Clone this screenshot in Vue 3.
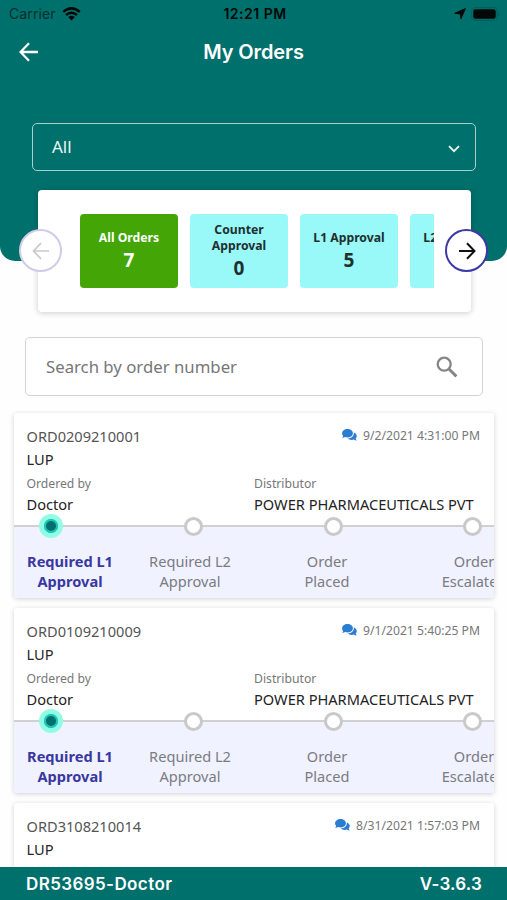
<script setup>
const tiles = [
  { label: 'All Orders', count: 7, active: true },
  { label: 'Counter Approval', count: 0 },
  { label: 'L1 Approval', count: 5 },
  { label: 'L2 Approval', count: 2 },
]
const orders = [
  { id: 'ORD0209210001', date: '9/2/2021 4:31:00 PM' },
  { id: 'ORD0109210009', date: '9/1/2021 5:40:25 PM' },
  { id: 'ORD3108210014', date: '8/31/2021 1:57:03 PM' },
]
const steps = [
  ['Required L1', 'Approval'],
  ['Required L2', 'Approval'],
  ['Order', 'Placed'],
  ['Order', 'Escalated'],
]
</script>

<template>
  <div class="screen">
    <header class="hero">
      <div class="status">
        <div class="carrier">
          <span class="carrier-name">Carrier</span>
          <svg width="19" height="14" viewBox="0 0 19 14">
            <path d="M1.2 4.9Q9.5-2.2 17.8 4.9M4 8Q9.5 3.4 15 8" fill="none" stroke="#020807" stroke-width="2.5" />
            <path d="M6.2 10.1Q9.5 7.6 12.8 10.1L9.5 13.5Z" fill="#020807" />
          </svg>
        </div>
        <span class="time">12:21 PM</span>
        <div class="indicators">
          <svg width="12" height="12" viewBox="0 0 12 12"><path d="M11.4.6 6.9 10.9 6.2 5.9.8 5.3Z" fill="#020807" stroke="#020807" stroke-width="1" stroke-linejoin="round" /></svg>
          <svg width="30" height="14" viewBox="0 0 30 14">
            <rect x=".7" y=".7" width="25.6" height="12.6" rx="3.8" fill="none" stroke="#035f5c" stroke-width="1.2" />
            <rect x="2.3" y="2.3" width="22.4" height="9.4" rx="2.3" fill="#020807" />
            <path d="M27.7 4.8Q29.4 7 27.7 9.2Z" fill="#035350" />
          </svg>
        </div>
      </div>
      <div class="titlebar">
        <svg class="back" width="20" height="20" viewBox="0 0 20 20"><path d="M10 1.3 1.5 10 10 18.7M1.7 10H19" fill="none" stroke="#fff" stroke-width="2.3" /></svg>
        <h1>My Orders</h1>
      </div>
      <div class="select">
        <span>All</span>
        <svg width="12" height="8" viewBox="0 0 12 8"><path d="M1 1.2 6 6.2 11 1.2" fill="none" stroke="#e8f6f5" stroke-width="1.8" /></svg>
      </div>
    </header>

    <section class="summary">
      <div class="tiles">
        <div v-for="t in tiles" :key="t.label" class="tile" :class="{ active: t.active }">
          <span class="tile-label">{{ t.label }}</span>
          <span class="tile-count">{{ t.count }}</span>
        </div>
      </div>
      <button class="nav prev">
        <svg width="18" height="18" viewBox="0 0 18 18"><path d="M9 1.2 1.5 9 9 16.8M1.7 9H17" fill="none" stroke="#c9c9c9" stroke-width="1.7" /></svg>
      </button>
      <button class="nav next">
        <svg width="18" height="18" viewBox="0 0 18 18"><path d="M9 1.2 16.5 9 9 16.8M16.3 9H1" fill="none" stroke="#111" stroke-width="2" /></svg>
      </button>
    </section>

    <div class="search">
      <span>Search by order number</span>
      <svg width="22" height="22" viewBox="0 0 22 22"><circle cx="8.2" cy="8.2" r="6.5" fill="none" stroke="#858585" stroke-width="2.3" /><path d="m12.7 12.7 7.7 7.7" stroke="#858585" stroke-width="2.9" /></svg>
    </div>

    <main class="list">
      <article v-for="o in orders" :key="o.id" class="order">
        <div class="order-body">
          <div class="order-head">
            <span class="order-id">{{ o.id }}</span>
            <span class="order-date">
              <svg width="15" height="12" viewBox="0 0 15 12" fill="#2b7cd3">
                <path d="M5.5.1C2.5.1.1 2 .1 4.4c0 1 .4 1.900 1.100 2.600C1 7.900.4 8.600.1 9c1.300 0 2.400-.5 3.100-.9.700.3 1.500.4 2.300.4 3 0 5.400-1.800 5.400-4.200S8.500.1 5.500.1Z" />
                <path d="M11.800 3.400c.6 3.300-2.500 5.900-6 5.900.9 1.100 2.300 1.600 3.800 1.600.8 0 1.500-.1 2.200-.4.800.5 1.800.9 3 .9-.5-.5-.9-1.100-1.100-1.900.7-.7 1.100-1.500 1.100-2.500 0-1.600-1.200-3-3-3.600Z" />
              </svg>
              {{ o.date }}
            </span>
          </div>
          <div class="division">LUP</div>
          <div class="parties">
            <div><small>Ordered by</small><p>Doctor</p></div>
            <div><small>Distributor</small><p>POWER PHARMACEUTICALS PVT</p></div>
          </div>
        </div>
        <div class="track">
          <div v-for="(s, i) in steps" :key="i" class="step" :class="{ current: i === 0 }">
            <i class="dot"></i>
            <span class="step-label">{{ s[0] }}<br />{{ s[1] }}</span>
          </div>
        </div>
      </article>
    </main>

    <footer class="footer">
      <span class="user">DR53695-Doctor</span>
      <span class="version">V-3.6.3</span>
    </footer>
  </div>
</template>

<style>
body { margin: 0; background: #fff; }
</style>

<style scoped>
* { box-sizing: border-box; }
svg { display: block; flex: none; }
.screen { width: 507px; height: 900px; display: flex; flex-direction: column; overflow: hidden; background: #fefefe; font-family: "Noto Sans", sans-serif; }
.hero { flex: none; height: 261px; background: #00706c; border-radius: 0 0 15px 15px; }
.status { height: 27px; padding: 0 6px 0 9px; display: grid; grid-template-columns: 1fr auto 1fr; align-items: center; font-family: Inter, sans-serif; color: #020807; }
.carrier { display: flex; align-items: center; gap: 6px; }
.carrier-name { font-size: 14px; color: #052f2d; letter-spacing: .1px; }
.time { font-size: 14px; font-weight: 600; letter-spacing: .5px; }
.indicators { display: flex; align-items: center; justify-content: flex-end; gap: 5px; }
.titlebar { height: 50px; padding: 0 19px; display: grid; grid-template-columns: 20px 1fr 20px; align-items: center; }
h1 { margin: 0; text-align: center; color: #fff; font: 600 20px/24px Inter, sans-serif; letter-spacing: -.1px; }
.select { margin: 46px 31px 0 32px; height: 48px; padding: 0 15px 0 19px; border: 1px solid #a8cfcd; border-radius: 5px; display: flex; align-items: center; justify-content: space-between; color: #e8f6f5; font-size: 17px; }
.select span { margin-top: -2px; }
.select svg { margin-top: 4px; }
.summary { flex: none; position: relative; width: 433px; height: 122px; margin: -71px 0 0 38px; padding: 24px 37px 0 42px; background: #fff; border-radius: 4px; box-shadow: 0 1px 6px #0003; }
.tiles { display: flex; gap: 12px; overflow: hidden; }
.tile { flex: none; width: 98px; height: 74px; padding: 2px 6px 0; border-radius: 4px; background: #99f9f8; color: #20302f; display: flex; flex-direction: column; align-items: center; justify-content: center; text-align: center; font-weight: 700; }
.tile.active { background: #43a506; color: #fff; }
.tile-label { font-size: 12.200px; line-height: 16px; }
.tile-count { font-size: 19px; line-height: 28px; }
.nav { position: absolute; top: 39px; width: 43px; height: 43px; padding: 0; border-radius: 50%; background: #fff; display: flex; align-items: center; justify-content: center; }
.prev { left: -19px; border: 2px solid #cfcbe9; }
.next { right: -17px; border: 2px solid #3c39a6; }
.search { flex: none; width: 458px; height: 59px; margin: 25px 0 0 25px; padding: 0 24px 0 20px; border: 1px solid #d3d3d3; border-radius: 5px; background: #fff; display: flex; align-items: center; justify-content: space-between; font-size: 16.750px; color: #777; }
.list { flex: 1; min-height: 0; padding: 17px 0 0 14px; overflow: hidden; display: flex; flex-direction: column; gap: 10px; }
.order { flex: none; width: 480px; height: 185px; background: #fff; border-radius: 3px; box-shadow: 0 1px 5px #0000002e; overflow: hidden; }
.order-body { height: 112px; padding: 12px 14px 0 12.500px; white-space: nowrap; }
.order-head { display: flex; justify-content: space-between; height: 22px; }
.order-id { font-size: 14.6px; line-height: 22px; color: #555; }
.order-date { display: flex; align-items: center; gap: 6px; height: 20px; font-size: 12.200px; color: #777; }
.division { height: 24px; font-size: 14.6px; line-height: 24px; color: #262626; }
.parties { display: grid; grid-template-columns: 227.500px 1fr; }
small { display: block; height: 23px; padding-top: 1px; font-size: 12.2px; line-height: 23px; color: #777; }
p { margin: 0; font-size: 14.6px; line-height: 20px; color: #222; }
.track { height: 73px; width: 540px; border-top: 2px solid #d0d0d2; background: #f0f2ff; display: grid; grid-template-columns: 112px 128px 146px 148px; }
.step { display: flex; flex-direction: column; align-items: center; color: #7b7b82; font-size: 14.600px; line-height: 20px; text-align: center; white-space: nowrap; }
.step-label { margin-top: 15px; }
.dot { position: relative; width: 19px; height: 19px; margin-top: -10.500px; border: 3.500px solid #c9c9c9; border-radius: 50%; background: #fff; left: 3px; }
.step:nth-child(3) .dot { left: 6px; }
.step:nth-child(4) .dot { left: -1.500px; }
.current .dot { left: -19px; width: 24px; height: 24px; margin-top: -13px; border: 5px solid #8effe3; background: #00706c; box-shadow: inset 0 0 0 2px #18c7bd; }
.current .step-label { margin-top: 12.500px; font-weight: 700; color: #3a37a0; }
.footer { flex: none; height: 33px; padding: 0 25px 0 26px; background: #00706c; color: #fff; display: flex; align-items: center; justify-content: space-between; font: 600 17px/20px Inter, sans-serif; }
.user { letter-spacing: .4px; }
.version { letter-spacing: .2px; }
</style>
